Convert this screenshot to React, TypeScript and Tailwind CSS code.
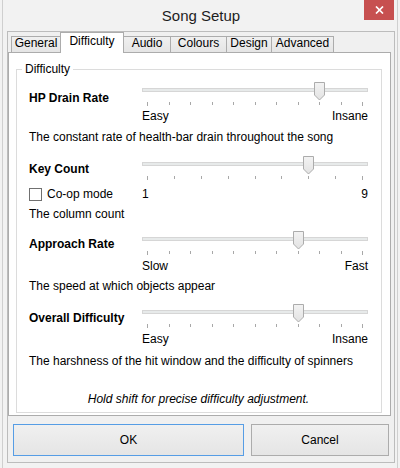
import React from 'react';

// tab strip, widths include the shared 1px borders
const tabs = [
  { name: 'General', w: 'w-[50px]' },
  { name: 'Difficulty', w: 'w-[64px]', active: true },
  { name: 'Audio', w: 'w-[48px]' },
  { name: 'Colours', w: 'w-[57px]' },
  { name: 'Design', w: 'w-[46px]' },
  { name: 'Advanced', w: 'w-[63px]' },
];

const Thumb = ({ left }: { left: number }) => (
  <svg className="absolute top-0" style={{ left }} width="11" height="19" viewBox="0 0 11 19">
    <defs>
      <linearGradient id="thumbFill" x1="0" y1="0" x2="0" y2="1">
        <stop offset="0" stopColor="#f3f3f3" />
        <stop offset="1" stopColor="#e2e2e2" />
      </linearGradient>
    </defs>
    <path d="M0.5 0.5 H10.5 V13 L5.5 18 L0.5 13 Z" fill="url(#thumbFill)" stroke="#acacac" />
  </svg>
);

type SliderProps = {
  ticks: number;
  value: number;
  low: string;
  high: string;
  labelsClass: string;
};

const Slider = ({ ticks, value, low, high, labelsClass }: SliderProps) => {
  const left = Math.round((value * 215) / (ticks - 1));
  return (
    <div className="w-[226px]">
      <div className="relative h-[24px] pt-[6px]">
        <div className="h-[4px] border border-[#d6d6d6] bg-[#e7eaea]" />
        <div className="mt-[10px] flex items-start justify-between px-[5px]">
          {Array.from({ length: ticks }).map((_, i) => (
            <div
              key={i}
              className={i === 0 || i === ticks - 1 ? 'w-px h-[4px] bg-[#a8a8a8]' : 'w-px h-[3px] bg-[#a8a8a8]'}
            />
          ))}
        </div>
        <Thumb left={left} />
      </div>
      <div className={`flex justify-between leading-[14px] ${labelsClass}`}>
        <span>{low}</span>
        <span>{high}</span>
      </div>
    </div>
  );
};

const Setting = ({
  title,
  rowClass,
  labelClass,
  slider,
  extra,
  desc,
  descClass,
}: {
  title: string;
  rowClass: string;
  labelClass: string;
  slider: SliderProps;
  extra?: React.ReactNode;
  desc: string;
  descClass: string;
}) => (
  <>
    <div className={`grid grid-cols-[113px_226px] ${rowClass}`}>
      <div className={labelClass}>
        <div className="font-bold leading-[14px]">{title}</div>
        {extra}
      </div>
      <Slider {...slider} />
    </div>
    <div className={`leading-[14px] ${descClass}`}>{desc}</div>
  </>
);

const CoopCheckbox = () => (
  <div className="mt-[11px] flex h-[14px] items-center">
    <div className="h-[13px] w-[13px] border border-[#707070] bg-white" />
    <span className="ml-[5px] leading-[14px]">Co-op mode</span>
  </div>
);

const App: React.FC = () => {
  return (
    <div className="w-[400px] h-[468px] overflow-hidden bg-[#f2f2f2] px-[2px] text-[12px] text-black font-['Liberation_Sans',Arial,sans-serif]">
      <div className="flex h-full flex-col border-x border-[#cfcfcf] pl-[4px] pr-[2px]">
        {/* title bar */}
        <div className="grid h-[31px] grid-cols-[1fr_auto_1fr]">
          <div />
          <div className="text-[15px] leading-[31px] text-[#1e1e1e]">Song Setup</div>
          <div className="flex justify-end pr-px">
            <div className="flex h-[20px] w-[30px] items-center justify-center bg-[#c75050]">
              <svg width="9" height="8" viewBox="0 0 9 8">
                <path d="M1 0.5 L8 7.5 M8 0.5 L1 7.5" stroke="#ffffff" strokeWidth="1.7" />
              </svg>
            </div>
          </div>
        </div>

        {/* client area */}
        <div className="flex h-[432px] flex-col border border-[#bcbcbc] bg-[#f0f0f0]">
          <div className="ml-[3px] flex h-[20px] items-end">
            {tabs.map((t, i) =>
              t.active ? (
                <div
                  key={t.name}
                  className={`${t.w} relative z-10 -ml-px mb-[-1px] h-[21px] border border-b-0 border-[#acacac] bg-white pt-[2px] text-center leading-[12px]`}
                >
                  {t.name}
                </div>
              ) : (
                <div
                  key={t.name}
                  className={`${t.w} ${i === 0 ? '' : '-ml-px'} h-[16px] border border-b-0 border-[#acacac] bg-gradient-to-b from-[#f0f0f0] to-[#e5e5e5] text-center leading-[12px]`}
                >
                  {t.name}
                </div>
              )
            )}
          </div>

          <div className="mr-[3px] flex h-[364px] flex-col border border-[#acacac] bg-white">
            <fieldset className="mb-[2px] ml-[7px] mr-[8px] mt-[9px] flex min-h-0 flex-1 flex-col border border-[#dcdcdc] pl-[12px] pr-[13px]">
              <legend className="ml-[-7px] px-[3px] leading-[14px]">Difficulty</legend>

              <Setting
                title="HP Drain Rate"
                rowClass="mt-[6px]"
                labelClass="pt-[9px]"
                slider={{ ticks: 11, value: 8, low: 'Easy', high: 'Insane', labelsClass: 'mt-[3px]' }}
                desc="The constant rate of health-bar drain throughout the song"
                descClass="mt-[7px]"
              />
              <Setting
                title="Key Count"
                rowClass="mt-[12px]"
                labelClass="pt-[6px]"
                extra={<CoopCheckbox />}
                slider={{ ticks: 9, value: 6, low: '1', high: '9', labelsClass: 'mt-[7px]' }}
                desc="The column count"
                descClass="mt-[6px]"
              />
              <Setting
                title="Approach Rate"
                rowClass="mt-[10px]"
                labelClass="pt-[6px]"
                slider={{ ticks: 11, value: 7, low: 'Slow', high: 'Fast', labelsClass: 'mt-[4px]' }}
                desc="The speed at which objects appear"
                descClass="mt-[6px]"
              />
              <Setting
                title="Overall Difficulty"
                rowClass="mt-[11px]"
                labelClass="pt-[7px]"
                slider={{ ticks: 11, value: 7, low: 'Easy', high: 'Insane', labelsClass: 'mt-[4px]' }}
                desc="The harshness of the hit window and the difficulty of spinners"
                descClass="mt-[8px]"
              />

              <div className="mt-[24px] text-center italic leading-[14px]">
                Hold shift for precise difficulty adjustment.
              </div>
            </fieldset>
          </div>

          <div className="ml-[5px] mt-[8px] flex gap-[7px]">
            <button className="h-[32px] w-[231px] border border-[#569de5] bg-gradient-to-b from-[#f0f0f0] to-[#e5e5e5] leading-[14px]">
              OK
            </button>
            <button className="h-[32px] w-[138px] border border-[#acacac] bg-gradient-to-b from-[#f0f0f0] to-[#e5e5e5] leading-[14px]">
              Cancel
            </button>
          </div>
        </div>
      </div>
    </div>
  );
};

export default App;
